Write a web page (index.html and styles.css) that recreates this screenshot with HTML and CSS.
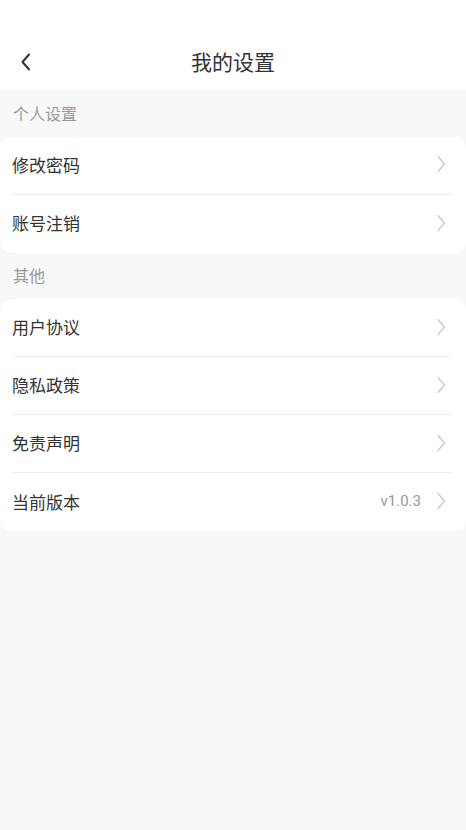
FILE: index.html
```html
<!DOCTYPE html>
<html lang="zh-CN">
<head>
<meta charset="utf-8">
<title>我的设置</title>
<link rel="stylesheet" href="styles.css">
</head>
<body>
<div class="page">
  <header class="header">
    <div class="bar">
      <span class="back">
        <svg width="14" height="20" viewBox="0 0 14 20"><path d="M10 2.5 L3.5 10 L10 17.5" fill="none" stroke="#333" stroke-width="2" stroke-linecap="round" stroke-linejoin="round"/></svg>
      </span>
      <h1 class="title">我的设置</h1>
    </div>
  </header>

  <div class="section-label">个人设置</div>
  <div class="card">
    <div class="row"><span class="row-text">修改密码</span><span class="row-right"><svg class="chev" width="10" height="18" viewBox="0 0 10 18"><path d="M2 1.5 L8.5 9 L2 16.5" fill="none" stroke="#c8c8c8" stroke-width="1.3" stroke-linecap="round" stroke-linejoin="round"/></svg></span></div>
    <div class="row"><span class="row-text">账号注销</span><span class="row-right"><svg class="chev" width="10" height="18" viewBox="0 0 10 18"><path d="M2 1.5 L8.5 9 L2 16.5" fill="none" stroke="#c8c8c8" stroke-width="1.3" stroke-linecap="round" stroke-linejoin="round"/></svg></span></div>
  </div>

  <div class="section-label">其他</div>
  <div class="card">
    <div class="row"><span class="row-text">用户协议</span><span class="row-right"><svg class="chev" width="10" height="18" viewBox="0 0 10 18"><path d="M2 1.5 L8.5 9 L2 16.5" fill="none" stroke="#c8c8c8" stroke-width="1.3" stroke-linecap="round" stroke-linejoin="round"/></svg></span></div>
    <div class="row"><span class="row-text">隐私政策</span><span class="row-right"><svg class="chev" width="10" height="18" viewBox="0 0 10 18"><path d="M2 1.5 L8.5 9 L2 16.5" fill="none" stroke="#c8c8c8" stroke-width="1.3" stroke-linecap="round" stroke-linejoin="round"/></svg></span></div>
    <div class="row"><span class="row-text">免责声明</span><span class="row-right"><svg class="chev" width="10" height="18" viewBox="0 0 10 18"><path d="M2 1.5 L8.5 9 L2 16.5" fill="none" stroke="#c8c8c8" stroke-width="1.3" stroke-linecap="round" stroke-linejoin="round"/></svg></span></div>
    <div class="row"><span class="row-text">当前版本</span><span class="row-right"><span class="version">v1.0.3</span><svg class="chev" width="10" height="18" viewBox="0 0 10 18"><path d="M2 1.5 L8.5 9 L2 16.5" fill="none" stroke="#c8c8c8" stroke-width="1.3" stroke-linecap="round" stroke-linejoin="round"/></svg></span></div>
  </div>
</div>
</body>
</html>
```

FILE: styles.css
```css
* { box-sizing: border-box; }
html, body {
  margin: 0;
  padding: 0;
  background: #f8f8f8;
  font-family: "Noto Sans CJK SC", "Noto Sans", sans-serif;
}
.page {
  width: 466px;
  min-height: 830px;
  background: #f8f8f8;
}
.header {
  background: #fff;
  padding-top: 39px;
  height: 90px;
}
.bar {
  height: 44px;
  display: flex;
  align-items: center;
  justify-content: center;
  position: relative;
}
.back {
  position: absolute;
  left: 19px;
  top: 13px;
  display: flex;
}
.title {
  margin: 0;
  font-size: 21px;
  font-weight: 400;
  color: #333;
  line-height: 44px;
}
.section-label {
  height: 46.5px;
  padding-left: 13px;
  padding-bottom: 1px;
  display: flex;
  align-items: center;
  font-size: 16px;
  color: #999;
}
.card {
  background: #fff;
  border-radius: 12px;
}
.row {
  height: 58px;
  margin: 0 14px 0 12px;
  padding-bottom: 2px;
  display: flex;
  align-items: center;
  justify-content: space-between;
  border-bottom: 1px solid #eeeeee;
}
.row:last-child { border-bottom: none; }
.row-text {
  font-size: 17px;
  color: #333;
}
.row-right {
  display: flex;
  align-items: center;
  gap: 15px;
}
.chev { display: block; margin-right: 6px; }
.version {
  font-family: Roboto, "Noto Sans", sans-serif;
  font-size: 15px;
  color: #999;
}
```
